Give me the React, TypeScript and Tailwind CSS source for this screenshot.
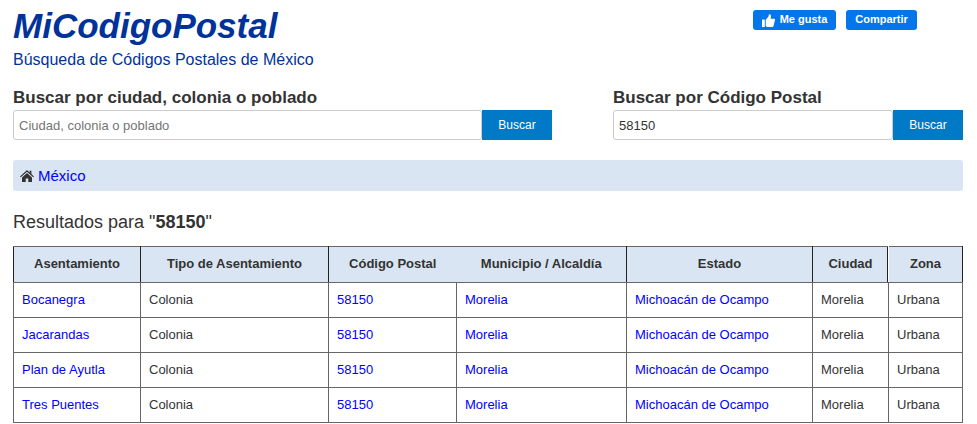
const rows = ["Bocanegra", "Jacarandas", "Plan de Ayutla", "Tres Puentes"];

const link = "text-[#0000ff]";
const td = "border border-[#666] h-[35px] px-2 text-left align-middle";
const th = "h-9 border-y border-y-[#666] border-x border-x-[#222] px-2 text-center font-bold";

function HomeIcon() {
  return (
    <svg viewBox="0 0 14 12" className="h-3 w-[14px] fill-[#333]">
      <path d="M7 0 L9.6 2.4 V0.8 H11.4 V4 L14 6.4 L13.2 7.3 L7 1.7 L0.8 7.3 L0 6.4 Z" />
      <path d="M7 3 L12 7.5 V12 H8.3 V8.6 H5.7 V12 H2 V7.5 Z" />
    </svg>
  );
}

function ThumbIcon() {
  return (
    <svg viewBox="0 0 14 14" className="size-[13px] fill-white">
      <path d="M0 6 H3 V14 H0 Z" />
      <path d="M4 6.2 L6.8 3 C7.4 2.2 7.3 1.2 7.4 0.4 C8.8 0 9.9 1 9.7 2.6 L9.3 5 H13 C13.8 5 14.2 5.7 14 6.4 L12.4 13 C12.2 13.6 11.8 14 11.2 14 H5.5 L4 13 Z" />
    </svg>
  );
}

export default function App() {
  return (
    <div className="h-[424px] w-[977px] overflow-hidden bg-white font-['Liberation_Sans',Arial,sans-serif] text-sm text-[#333]">
      <div className="mx-[13px] w-[950px]">
        {/* Header */}
        <div className="flex items-start justify-between">
          <div>
            <h1 className="mt-[6px] text-[35px] leading-[40px] font-bold text-[#003399] italic">MiCodigoPostal</h1>
            <p className="mt-[3px] text-base leading-[22px] text-[#003399]">Búsqueda de Códigos Postales de México</p>
          </div>
          <div className="mt-[10px] mr-[46px] flex gap-[10px] text-[11px] font-bold text-white">
            <a className="flex h-5 w-[83px] items-center justify-center gap-[5px] rounded-[3px] bg-[#0576ea]">
              <ThumbIcon />
              Me gusta
            </a>
            <a className="flex h-5 w-[71px] items-center justify-center rounded-[3px] bg-[#0576ea]">Compartir</a>
          </div>
        </div>

        {/* Search forms */}
        <div className="mt-4 flex justify-between">
          <form className="w-[539px]">
            <label className="block text-[17px] leading-[22px] font-bold">Buscar por ciudad, colonia o poblado</label>
            <div className="mt-[1px] flex">
              <input
                className="h-[30px] w-[469px] rounded-[3px] border border-[#ccc] px-[5px] text-[13px] text-[#333] placeholder:text-[#757575]"
                placeholder="Ciudad, colonia o poblado"
              />
              <button type="button" className="h-[30px] w-[70px] bg-[#0079c6] text-xs text-white">Buscar</button>
            </div>
          </form>
          <form className="w-[350px]">
            <label className="block text-[17px] leading-[22px] font-bold">Buscar por Código Postal</label>
            <div className="mt-[1px] flex">
              <input
                className="h-[30px] w-[280px] rounded-[3px] border border-[#ccc] px-[5px] text-[13px] text-[#333]"
                defaultValue="58150"
              />
              <button type="button" className="h-[30px] w-[70px] bg-[#0079c6] text-xs text-white">Buscar</button>
            </div>
          </form>
        </div>

        {/* Breadcrumb */}
        <div className="mt-5 flex h-[31px] items-center gap-[4px] rounded-[3px] bg-[#d9e5f2] px-[7px] text-[15px]">
          <HomeIcon />
          <a className={link}>México</a>
        </div>

        <h2 className="mt-[20px] text-lg leading-[22px]">
          Resultados para "<b>58150</b>"
        </h2>

        {/* Results */}
        <table className="mt-[13px] w-[949px] table-fixed border-collapse text-[13px]">
          <colgroup>
            <col className="w-[127px]" />
            <col className="w-[188px]" />
            <col className="w-[128px]" />
            <col className="w-[170px]" />
            <col className="w-[186px]" />
            <col className="w-[76px]" />
            <col className="w-[74px]" />
          </colgroup>
          <thead className="bg-[#d9e5f2]">
            <tr>
              <th className={th}>Asentamiento</th>
              <th className={th}>Tipo de Asentamiento</th>
              <th className="h-9 border-y border-l border-y-[#666] border-l-[#222] text-center font-bold">Código Postal</th>
              <th className="h-9 border-y border-r border-y-[#666] border-r-[#222] text-center font-bold">Municipio / Alcaldía</th>
              <th className={th}>Estado</th>
              <th className="h-9 border-y border-x border-y-[#666] border-l-[#222] border-r-white px-2 text-center font-bold shadow-[inset_-1px_0_0_#222]">Ciudad</th>
              <th className="h-9 border-y border-x border-y-[#666] border-l-white border-r-[#222] px-2 text-center font-bold">Zona</th>
            </tr>
          </thead>
          <tbody>
            {rows.map((name) => (
              <tr key={name}>
                <td className={td}><a className={link}>{name}</a></td>
                <td className={td}>Colonia</td>
                <td className={td}><a className={link}>58150</a></td>
                <td className={td}><a className={link}>Morelia</a></td>
                <td className={td}><a className={link}>Michoacán de Ocampo</a></td>
                <td className={td}>Morelia</td>
                <td className={td}>Urbana</td>
              </tr>
            ))}
          </tbody>
        </table>
      </div>
    </div>
  );
}
